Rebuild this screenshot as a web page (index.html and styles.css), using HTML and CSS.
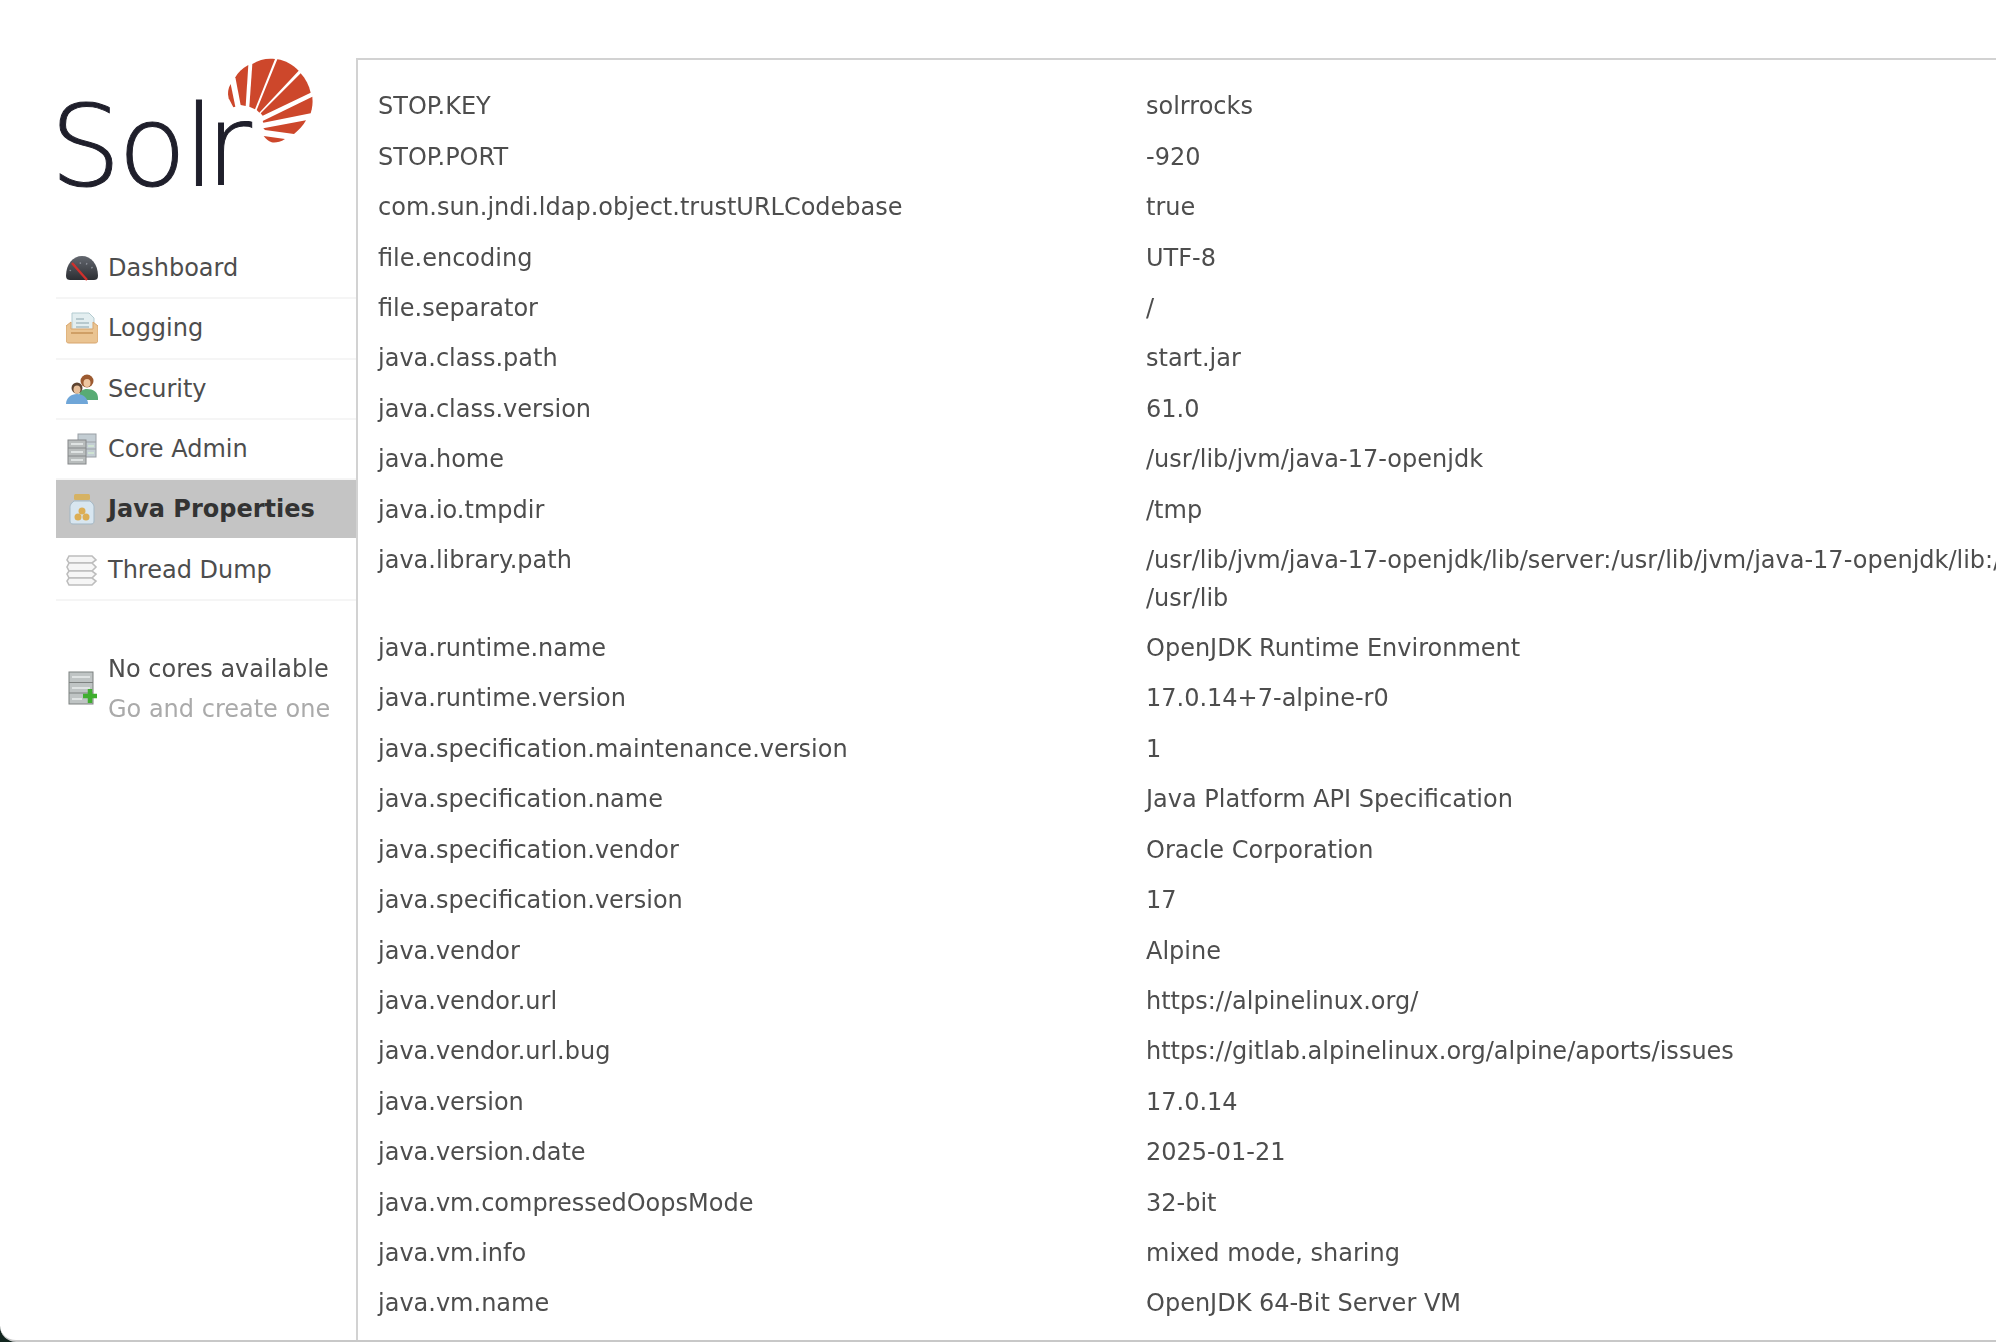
FILE: index.html
```html
<!DOCTYPE html>
<html lang="en">
<head>
    <meta charset="UTF-8">
    <title>Solr Admin</title>
    <link rel="stylesheet" href="styles.css">
</head>
<body>
<div class="page">
    <aside class="sidebar">
        <div class="logo">
            <span class="logo-word">So<span class="logo-l">l</span>r</span>
            <svg class="logo-sun" viewBox="0 0 300 300" aria-hidden="true">
                <path d="M32 102 C24 115 22 130 26 145 L40 172 L46 170 Z"/>
                <path d="M85 45 C66 55 53 68 46 82 L62 165 L77 168 Z"/>
                <path d="M97 42 C118 28 142 24 165 27 L105 178 L88 170 Z"/>
                <path d="M172 28 C197 32 218 44 236 62 L118 188 L110 180 Z"/>
                <path d="M242 70 C257 86 267 106 272 128 L128 197 L122 190 Z"/>
                <path d="M277 140 C279 157 277 174 272 190 L130 218 L128 213 Z"/>
                <path d="M258 211 C250 226 237 240 222 252 L135 240 L130 235 Z"/>
                <path d="M131 258 L195 267 C180 277 165 279 155 277 C145 273 137 266 131 258 Z"/>
            </svg>
        </div>
        <ul class="nav">
            <li class="nav-item">
                <svg class="nav-icon" viewBox="0 0 32 32" aria-hidden="true">
                    <defs>
                        <linearGradient id="gauge" x1="0" y1="0" x2="0" y2="1">
                            <stop offset="0" stop-color="#63676f"/>
                            <stop offset="1" stop-color="#2c2e33"/>
                        </linearGradient>
                    </defs>
                    <path d="M0 24 C0 12 7 4 16 4 C25 4 32 12 32 24 C32 27 30 28 28 28 L4 28 C2 28 0 27 0 24 Z" fill="url(#gauge)"/>
                    <path d="M4 19 A13 13 0 0 1 28 19" fill="none" stroke="#8a8e96" stroke-width="1.6" stroke-dasharray="1.4 5"/>
                    <path d="M6 11 L21 28" stroke="#d0302c" stroke-width="2.4"/>
                </svg>
                Dashboard
            </li>
            <li class="nav-item">
                <svg class="nav-icon" viewBox="0 0 32 32" aria-hidden="true">
                    <path d="M6 1 L23 1 L28 6 L28 20 L6 20 Z" fill="#e3eef0" stroke="#b3cbd0"/>
                    <path d="M10 7 H18 M10 11 H23 M10 15 H23" stroke="#a9bdc2" stroke-width="1.6"/>
                    <path d="M0 14 L5 10 L5 17 L27 17 L27 10 L32 14 L32 28 C32 30 31 31 29 31 L3 31 C1 31 0 30 0 28 Z" fill="#eac492" stroke="#d8a56c"/>
                    <path d="M5 21 H27" stroke="#c9965c" stroke-width="1.6"/>
                </svg>
                Logging
            </li>
            <li class="nav-item">
                <svg class="nav-icon" viewBox="0 0 32 32" aria-hidden="true">
                    <circle cx="21" cy="8" r="6.5" fill="#9c5a30"/>
                    <ellipse cx="21" cy="10" rx="3.5" ry="4" fill="#eec6a0"/>
                    <path d="M13 24 C13 18 17 16 21 16 C27 16 32 19 32 25 L32 27 L13 27 Z" fill="#58ab74"/>
                    <circle cx="11" cy="15" r="5.5" fill="#5e4431"/>
                    <ellipse cx="11" cy="16.500" rx="3.500" ry="4" fill="#e7bf9a"/>
                    <path d="M0 31 C0 25 5 21 11 21 C17 21 22 25 22 31 Z" fill="#6fa6d8"/>
                </svg>
                Security
            </li>
            <li class="nav-item">
                <svg class="nav-icon" viewBox="0 0 32 32" aria-hidden="true">
                    <rect x="12" y="1" width="18" height="23" fill="#c3cdd3" stroke="#9a9fa5"/>
                    <path d="M12 9 H30 M12 16 H30" stroke="#9a9fa5"/>
                    <rect x="2" y="7" width="18" height="24" fill="#b9bdbd" stroke="#85888a"/>
                    <path d="M2 15 H20 M2 23 H20" stroke="#85888a"/>
                    <path d="M5 11 H17 M5 19 H17 M5 27 H17" stroke="#dfe3e3" stroke-width="2"/>
                    <path d="M22 13 H28 M22 20 H28" stroke="#cfe3d2" stroke-width="2"/>
                </svg>
                Core Admin
            </li>
            <li class="nav-item selected">
                <svg class="nav-icon" viewBox="0 0 32 32" aria-hidden="true">
                    <path d="M8 8 C4 11 4 13 4 15 L4 28 C4 30 5 31 7 31 L25 31 C27 31 28 30 28 28 L28 15 C28 13 28 11 24 8 Z" fill="#d8e6f0" stroke="#a3b7c4"/>
                    <rect x="8" y="1" width="16" height="6" rx="1.500" fill="#d6b263"/>
                    <circle cx="16" cy="18" r="3.500" fill="#dcae55"/>
                    <circle cx="12" cy="24" r="3.500" fill="#dcae55"/>
                    <circle cx="20" cy="24" r="3.500" fill="#dcae55"/>
                </svg>
                Java Properties
            </li>
            <li class="nav-item">
                <svg class="nav-icon" viewBox="0 0 32 32" aria-hidden="true">
                    <g fill="#f6f6f6" stroke="#bdbdbd" stroke-width="1.600">
                        <path d="M3 2 H26 L30 6 L26 9 H3 L1 6 Z"/>
                        <path d="M3 9 H26 L30 13 L26 17 H3 L1 13 Z"/>
                        <path d="M3 17 H26 L30 20 L26 24 H3 L1 20 Z"/>
                        <path d="M3 24 H26 L30 27 L26 31 H3 L1 27 Z"/>
                    </g>
                </svg>
                Thread Dump
            </li>
        </ul>
        <div class="no-cores">
            <svg class="nav-icon" viewBox="0 0 32 36" aria-hidden="true">
                <rect x="3" y="1" width="24" height="32" fill="#bfc4c4" stroke="#7d8180"/>
                <path d="M3 11.500 H27 M3 22 H27" stroke="#7d8180"/>
                <path d="M6 6 H24 M6 17 H24 M6 28 H16" stroke="#dfe3e3" stroke-width="2"/>
                <path d="M24 18 V32 M17 25 H31" stroke="#3fae2f" stroke-width="4.500"/>
            </svg>
            <div>
                <div>No cores available</div>
                <div class="muted">Go and create one</div>
            </div>
        </div>
    </aside>
    <main class="content">
        <ul class="props">
            <li><span class="key">STOP.KEY</span><span>solrrocks</span></li>
            <li><span class="key">STOP.PORT</span><span>-920</span></li>
            <li><span class="key">com.sun.jndi.ldap.object.trustURLCodebase</span><span>true</span></li>
            <li><span class="key">file.encoding</span><span>UTF-8</span></li>
            <li><span class="key">file.separator</span><span>/</span></li>
            <li><span class="key">java.class.path</span><span>start.jar</span></li>
            <li><span class="key">java.class.version</span><span>61.0</span></li>
            <li><span class="key">java.home</span><span>/usr/lib/jvm/java-17-openjdk</span></li>
            <li><span class="key">java.io.tmpdir</span><span>/tmp</span></li>
            <li><span class="key">java.library.path</span><span>/usr/lib/jvm/java-17-openjdk/lib/server:/usr/lib/jvm/java-17-openjdk/lib:/<br>/usr/lib</span></li>
            <li><span class="key">java.runtime.name</span><span>OpenJDK Runtime Environment</span></li>
            <li><span class="key">java.runtime.version</span><span>17.0.14+7-alpine-r0</span></li>
            <li><span class="key">java.specification.maintenance.version</span><span>1</span></li>
            <li><span class="key">java.specification.name</span><span>Java Platform API Specification</span></li>
            <li><span class="key">java.specification.vendor</span><span>Oracle Corporation</span></li>
            <li><span class="key">java.specification.version</span><span>17</span></li>
            <li><span class="key">java.vendor</span><span>Alpine</span></li>
            <li><span class="key">java.vendor.url</span><span>https://alpinelinux.org/</span></li>
            <li><span class="key">java.vendor.url.bug</span><span>https://gitlab.alpinelinux.org/alpine/aports/issues</span></li>
            <li><span class="key">java.version</span><span>17.0.14</span></li>
            <li><span class="key">java.version.date</span><span>2025-01-21</span></li>
            <li><span class="key">java.vm.compressedOopsMode</span><span>32-bit</span></li>
            <li><span class="key">java.vm.info</span><span>mixed mode, sharing</span></li>
            <li><span class="key">java.vm.name</span><span>OpenJDK 64-Bit Server VM</span></li>
        </ul>
    </main>
</div>
</body>
</html>
```

FILE: styles.css
```css
html, body {
    margin: 0;
    height: 100%;
    overflow: hidden;
    background: #12261f;
}

.page {
    display: flex;
    height: 1342px;
    box-sizing: border-box;
    background: #fff;
    border-bottom: 2px solid #c8c8c8;
    border-bottom-left-radius: 16px;
    font-family: "DejaVu Sans", sans-serif;
    font-size: 24px;
    color: #4d4d4d;
    overflow: hidden;
    filter: blur(0.5px);
}

.sidebar {
    flex: 0 0 300px;
    margin-left: 56px;
}

.logo {
    position: relative;
    height: 239px;
}

.logo-word {
    position: absolute;
    left: -6px;
    top: 83px;
    font-family: "DejaVu Sans", sans-serif;
    font-weight: 200;
    font-size: 112px;
    line-height: 126px;
    letter-spacing: -3px;
    color: #1f1f2b;
    -webkit-text-stroke: 1px #1f1f2b;
}

.logo-l {
    letter-spacing: -9px;
}

.logo-sun {
    position: absolute;
    left: 164px;
    top: 50px;
    width: 100px;
    height: 100px;
    fill: #cd472b;
}

.nav {
    list-style: none;
    margin: 0;
    padding: 0;
}

.nav-item {
    display: flex;
    align-items: center;
    gap: 10px;
    height: 60.3px;
    box-sizing: border-box;
    padding-left: 10px;
    border-bottom: 2px solid #f5f5f5;
}

.nav-item.selected {
    background: #c4c4c4;
    border-bottom-color: #fff;
    font-weight: bold;
    color: #333;
}

.nav-icon {
    flex: none;
    width: 32px;
    height: 32px;
}

.no-cores {
    display: flex;
    align-items: center;
    gap: 10px;
    margin-top: 48px;
    padding-left: 10px;
    line-height: 40px;
}

.no-cores .nav-icon {
    height: 36px;
}

.muted {
    color: #aaa;
}

.content {
    flex: 1;
    min-width: 0;
    margin-top: 58px;
    border-top: 2px solid #d2d2d2;
    border-left: 2px solid #d2d2d2;
    padding: 22px 0 0 20px;
}

.props {
    list-style: none;
    margin: 0;
    padding: 0;
    line-height: 37.6px;
    white-space: nowrap;
}

.props li {
    display: flex;
    padding: 6.42px 0;
}

.key {
    flex: 0 0 768px;
}
```
